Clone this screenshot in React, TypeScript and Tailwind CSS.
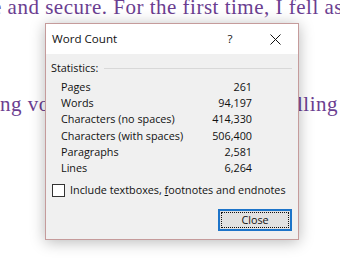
export default function App() {
  const stats: [string, string][] = [
    ['Pages', '261'],
    ['Words', '94,197'],
    ['Characters (no spaces)', '414,330'],
    ['Characters (with spaces)', '506,400'],
    ['Paragraphs', '2,581'],
    ['Lines', '6,264'],
  ];

  return (
    <div className="relative w-[340px] h-[261px] overflow-hidden bg-white">
      {/* document text behind the dialog */}
      <div className="text-[#6b3e91] text-[21px] tracking-[0.5px] leading-[22px] whitespace-nowrap" style={{ fontFamily: '"Liberation Serif", serif' }}>
        <div className="-ml-[8px] -mt-[4px]">e and secure. For the first time, I fell as</div>
        <div className="mt-[75px] flex justify-between">
          <span>ng vo</span>
          <span className="pr-[2px]">lling</span>
        </div>
      </div>

      {/* Word Count dialog */}
      <div
        className="absolute left-[45px] top-[23px] w-[254px] h-[217px] border border-[#c59b9b] bg-[#f0f0f0] shadow-[0_2px_14px_rgba(0,0,0,0.28)] flex flex-col text-[10.8px] text-[#111]"
        style={{ fontFamily: '"Open Sans", "Noto Sans", sans-serif' }}
      >
        <div className="h-[30px] bg-white flex items-center pl-[6px] text-[11.6px]">
          <span className="flex-1">Word Count</span>
          <span className="w-[10px] text-center mr-[35px]">?</span>
          <svg width="11" height="11" viewBox="0 0 11 11" className="mr-[17px]">
            <path d="M0.5 0.5 L10.5 10.5 M10.5 0.5 L0.5 10.5" stroke="#111" strokeWidth="1" />
          </svg>
        </div>

        <div className="flex-1 px-[5px] pt-[6px]">
          <div className="flex items-center gap-[6px] h-[16px]">
            <span>Statistics:</span>
            <div className="flex-1 h-px bg-[#d8d8d8] mr-[1px]" />
          </div>
          <div className="mt-[3px] pl-[10px] pr-[41px]">
            {stats.map(([label, value]) => (
              <div key={label} className="flex justify-between h-[16.2px] items-center">
                <span>{label}</span>
                <span>{value}</span>
              </div>
            ))}
          </div>

          <div className="flex items-center mt-[6px] h-[16px] whitespace-nowrap">
            <div className="w-[13px] h-[13px] border border-[#333] bg-white ml-[1px] shrink-0" />
            <span className="ml-[5px]">
              Include textboxes, <span className="underline">f</span>ootnotes and endnotes
            </span>
          </div>

          <div className="flex justify-end mt-[11px] pr-[1px]">
            <button className="w-[74px] h-[22px] border-2 border-[#1d74c9] bg-[#e1e1e1] p-[1px]">
              <div className="w-full h-full border border-dotted border-[#111] flex items-center justify-center leading-none">
                Close
              </div>
            </button>
          </div>
        </div>
      </div>
    </div>
  );
}
